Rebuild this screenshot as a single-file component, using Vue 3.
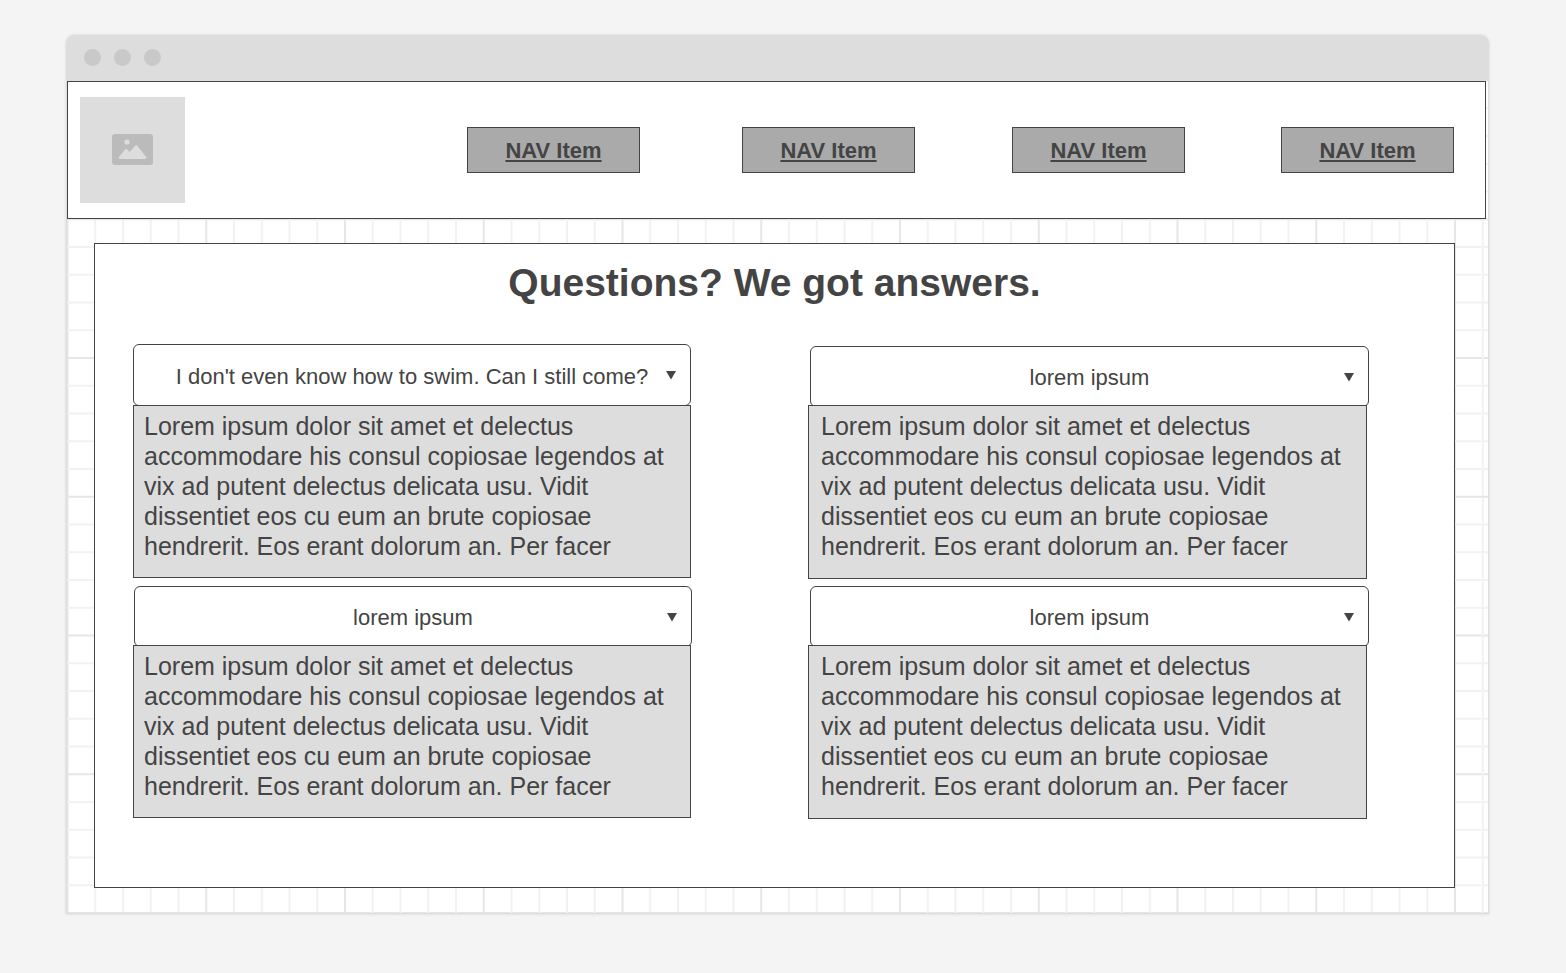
<script setup>
const navItems = ['NAV Item', 'NAV Item', 'NAV Item', 'NAV Item']

const answer =
  'Lorem ipsum dolor sit amet et delectus accommodare his consul copiosae legendos at vix ad putent delectus delicata usu. Vidit dissentiet eos cu eum an brute copiosae hendrerit. Eos erant dolorum an. Per facer'

const faqs = [
  { question: "I don't even know how to swim. Can I still come?", kind: 'lead' },
  { question: 'lorem ipsum', kind: 'end' },
  { question: 'lorem ipsum', kind: 'start' },
  { question: 'lorem ipsum', kind: 'end' }
]

// Twenty cells fill one 555px tile; every fifth line is a major one.
const gridLines = Array.from({ length: 20 }, (_, i) => ({
  at: (i * 555) / 20 + 1.5,
  major: i % 5 === 0
}))
</script>

<template>
  <div class="page">
    <div class="window">
      <div class="titlebar">
        <span class="dot"></span>
        <span class="dot"></span>
        <span class="dot"></span>
      </div>
      <div class="canvas">
        <svg class="grid-lines" aria-hidden="true">
          <defs>
            <pattern id="cells" width="555" height="555" patternUnits="userSpaceOnUse" x="-1" y="-2">
              <g v-for="line in gridLines" :key="line.at" :class="line.major ? 'major' : 'minor'">
                <path :d="`M${line.at} 0V555`" />
                <path :d="`M0 ${line.at}H555`" />
              </g>
            </pattern>
          </defs>
          <rect width="100%" height="100%" fill="url(#cells)" />
        </svg>

        <header class="header">
          <div class="logo">
            <svg width="41" height="31" viewBox="0 0 41 31" role="img" aria-label="Logo placeholder">
              <rect width="41" height="31" rx="3" fill="#bbb" />
              <circle cx="15" cy="8" r="2.6" fill="#ddd" />
              <path d="M7.2 22.6L13.4 15Q14 14.4 14.6 15L17.8 18L23.4 11.6Q24.2 10.8 25 11.6L34 22.8Q34.8 25 32.8 25H8.4Q6 25 7.2 22.6Z" fill="#ddd" />
            </svg>
          </div>
          <nav class="nav">
            <a v-for="(item, i) in navItems" :key="i" href="#" class="nav-item">{{ item }}</a>
          </nav>
        </header>

        <main class="panel">
          <h1 class="title">Questions? We got answers.</h1>
          <div class="faqs">
            <section v-for="(faq, i) in faqs" :key="i" class="faq" :class="faq.kind">
              <div class="picker">
                <select class="question" :aria-label="`Question ${i + 1}`">
                  <option>{{ faq.question }}</option>
                </select>
                <svg class="arrow" width="10" height="9" viewBox="0 0 10 9" aria-hidden="true">
                  <path d="M0 0H10L5 8.5Z" fill="#444" />
                </svg>
              </div>
              <p class="answer">{{ answer }}</p>
            </section>
          </div>
        </main>
      </div>
    </div>
  </div>
</template>

<style>
body {
  background: #f4f4f4;
}
</style>

<style scoped>
.page {
  box-sizing: border-box;
  min-height: 100vh;
  padding: 35px 77px 59px 66px;
  background: #f4f4f4;
  color: #444;
  font-family: "Liberation Sans", Arial, sans-serif;
}

.window {
  border-radius: 8px 8px 2px 2px;
  box-shadow: 0 0 2px 1px #e4e4e4;
}

.titlebar {
  display: flex;
  align-items: center;
  gap: 13px;
  box-sizing: border-box;
  height: 46px;
  padding: 0 18px 2px;
  border-radius: 8px 8px 0 0;
  background: #ddd;
}

.dot {
  width: 17px;
  height: 17px;
  border-radius: 50%;
  background: #c9c9c9;
}

.canvas {
  position: relative;
  padding-bottom: 25px;
  border: 1px solid #ddd;
  border-top: 0;
  background: #fff;
}

.grid-lines {
  position: absolute;
  inset: 0;
  width: 100%;
  height: 100%;
}

.minor {
  stroke: #f2f2f2;
  stroke-width: 2;
}

.major {
  stroke: #e6e6e6;
  stroke-width: 2;
}

.header {
  position: relative;
  display: flex;
  align-items: center;
  gap: 282px;
  box-sizing: border-box;
  height: 138px;
  margin-right: 2px;
  padding: 0 31px 0 12px;
  border: 1px solid #444;
  background: #fff;
}

.logo {
  display: flex;
  flex: none;
  align-items: center;
  justify-content: center;
  box-sizing: border-box;
  width: 105px;
  height: 106px;
  padding-bottom: 2px;
  background: #ddd;
}

.nav {
  display: grid;
  flex: 1;
  grid-template-columns: 275fr 270fr 269fr 173px;
}

.nav-item {
  box-sizing: border-box;
  width: 173px;
  padding-top: 2px;
  border: 1px solid #444;
  background: #aaa;
  color: #444;
  font-size: 22px;
  font-weight: bold;
  line-height: 42px;
  text-align: center;
  text-decoration: underline;
}

.panel {
  position: relative;
  margin: 24px 33px 0 27px;
  padding: 16px 87px 68px 38px;
  border: 1px solid #444;
  background: #fff;
}

.title {
  margin: 0 -49px 38px 0;
  font-size: 39px;
  line-height: 46px;
  text-align: center;
}

.faqs {
  display: grid;
  grid-template-columns: 558fr 559fr;
  align-items: end;
  gap: 7px 117px;
}

.picker {
  position: relative;
  height: 61px;
}

.lead,
.start {
  padding-bottom: 1px;
}

.lead .picker {
  height: 62px;
  margin-bottom: -1px;
}

.start .picker {
  margin: 0 -1px -2px 1px;
}

.end .picker {
  margin: 0 -2px -2px 2px;
}

.question {
  display: block;
  box-sizing: border-box;
  width: 100%;
  height: 100%;
  margin: 0;
  padding: 2px 0 0;
  border: 1px solid #444;
  border-radius: 6px;
  appearance: none;
  background: #fff;
  color: #444;
  font-family: inherit;
  font-size: 22px;
  text-align: center;
  text-align-last: center;
}

.arrow {
  position: absolute;
  top: 27px;
  right: 15px;
  pointer-events: none;
}

.answer {
  position: relative;
  box-sizing: border-box;
  min-height: 173px;
  margin: 0;
  padding: 5px 10px 10px;
  border: 1px solid #444;
  background: #ddd;
  font-size: 25px;
  line-height: 30px;
}

.end .answer {
  min-height: 174px;
  padding-left: 12px;
}
</style>
